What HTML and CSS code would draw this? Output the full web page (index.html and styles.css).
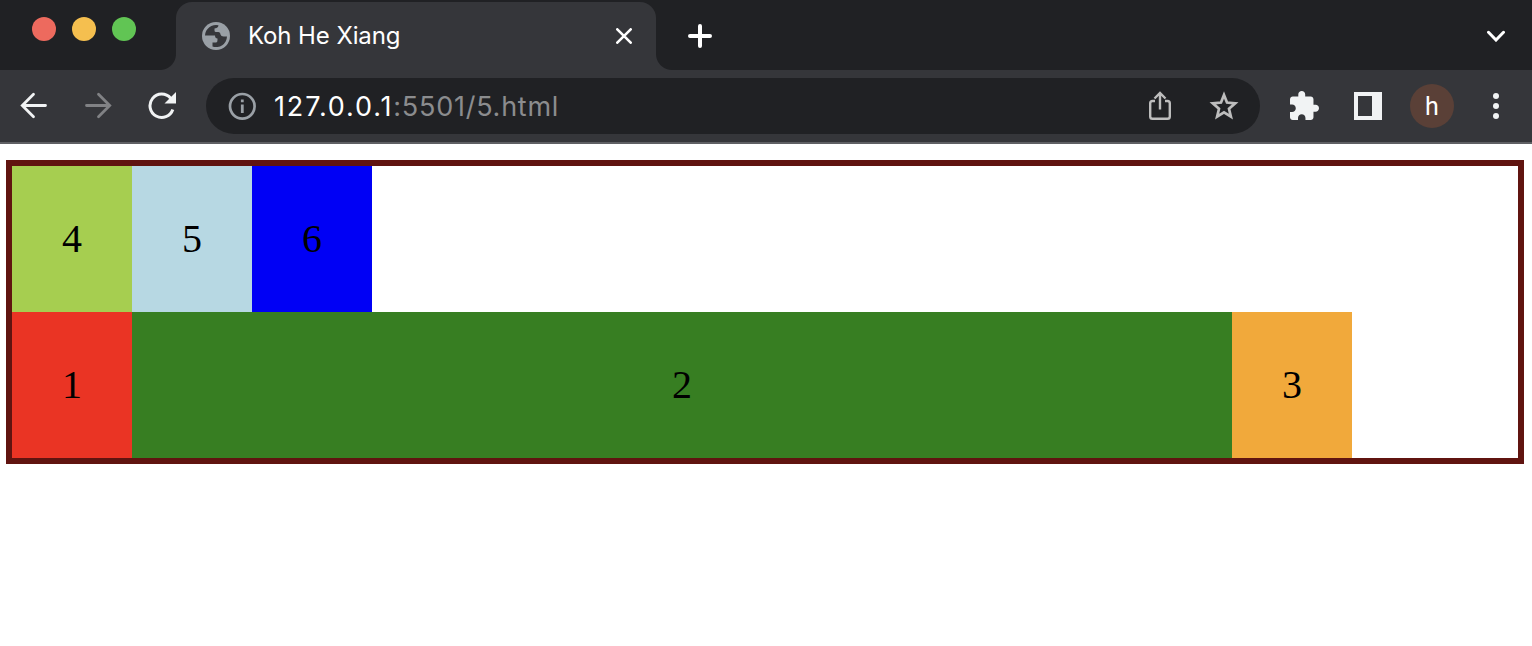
FILE: index.html
```html
<!DOCTYPE html>
<html lang="en">
<head>
<meta charset="utf-8">
<title>Koh He Xiang</title>
<link rel="stylesheet" href="styles.css">
</head>
<body>
<header class="tabstrip">
  <div class="lights"><span class="light close"></span><span class="light minimise"></span><span class="light expand"></span></div>
  <div class="tab">
    <svg class="globe" width="28" height="28" viewBox="0 0 28 28"><circle cx="14" cy="14" r="14" fill="#9aa0a6"/><path d="M3 13.500A11 11 0 0 1 16.500 3.200Q16.500 5.500 14.500 6L12.500 6.500V8.500Q12.500 10 14 10H16.500Q18.500 10 18.500 12.500Q19 14.500 21.500 14.500H25A11 11 0 0 1 10.500 24.500V20.500H14Q15.500 20.500 15.500 18V16.500Q13 16.500 13 13.500Z" fill="#35363a"/></svg>
    <span class="tab-title">Koh He Xiang</span>
    <svg class="tab-close" width="16" height="16" viewBox="0 0 16 16" fill="none" stroke="#fff" stroke-width="2.600" stroke-linecap="round"><path d="M1.300 1.300 14.700 14.700M14.700 1.300 1.300 14.700"/></svg>
  </div>
  <svg class="new-tab" width="24" height="24" viewBox="0 0 24 24" stroke="#fff" stroke-width="4" stroke-linecap="round"><path d="M12 2V22M2 12H22"/></svg>
  <svg class="tab-search" width="18" height="12" viewBox="0 0 18 12" fill="none" stroke="#fff" stroke-width="3" stroke-linecap="round"><path d="M1.500 2.300 9 10 16.500 2.300"/></svg>
</header>
<nav class="toolbar">
  <div class="nav-buttons">
    <svg width="28" height="28" viewBox="0 0 28 28" fill="none" stroke="#f1f3f4" stroke-width="2.800" stroke-linecap="round"><path d="M25.500 13.500H2.500M13.500 2.300 2.300 13.500 13.500 24.700"/></svg>
    <svg width="28" height="28" viewBox="0 0 28 28" fill="none" stroke="#818285" stroke-width="2.800" stroke-linecap="round"><path d="M2.500 13.500H25.500M14.500 2.300 25.700 13.500 14.500 24.700"/></svg>
    <svg width="28" height="28" viewBox="0 0 28 28"><path d="M22.600 6.200A11.700 11.700 0 1 0 24.800 17.500" fill="none" stroke="#f1f3f4" stroke-width="3"/><path d="M28 0V11.500H16.500Z" fill="#f1f3f4"/></svg>
  </div>
  <div class="omnibox">
    <svg width="28" height="28" viewBox="0 0 28 28" fill="none"><circle cx="14.300" cy="14.300" r="12.300" stroke="#9aa0a6" stroke-width="2.700"/><path d="M12.900 7.500h2.800v2.800h-2.800zM12.900 12.600h2.800v8.400h-2.800z" fill="#9aa0a6"/></svg>
    <span class="url"><span class="host">127.0.0.1</span><span class="path">:5501/5.html</span></span>
    <svg class="share" width="24" height="30" viewBox="0 0 24 30" fill="none" stroke="#bdbdbd" stroke-width="2.400"><path d="M7 10H4.500Q2.200 10 2.200 12.300V25.500Q2.200 27.800 4.500 27.800H19.500Q21.800 27.800 21.800 25.500V12.300Q21.800 10 19.500 10H17M12 18.500V2.500M6.500 7.500 12 2 17.500 7.500"/></svg>
    <svg class="star" width="30" height="30" viewBox="0 0 30 30" fill="none" stroke="#bdbdbd" stroke-width="2.700"><path d="M15 4 18 11.600 26.200 12.300 20 17.700 21.900 25.700 15 21.400 8.100 25.700 10 17.700 3.800 12.300 12 11.600Z"/></svg>
  </div>
  <svg class="puzzle" width="29" height="29" viewBox="2 1 21 21" fill="#f1f3f4"><path d="M20.500 11H19V7c0-1.100-.9-2-2-2h-4V3.500C13 2.120 11.880 1 10.500 1S8 2.120 8 3.500V5H4c-1.100 0-1.990.9-1.990 2v3.800H3.500c1.490 0 2.700 1.210 2.700 2.700s-1.210 2.700-2.700 2.700H2V20c0 1.100.9 2 2 2h3.800v-1.500c0-1.490 1.210-2.700 2.700-2.700 1.490 0 2.700 1.210 2.700 2.700V22H17c1.100 0 2-.9 2-2v-4h1.500c1.380 0 2.500-1.120 2.500-2.500S21.880 11 20.500 11z"/></svg>
  <svg class="panel" width="28" height="28" viewBox="0 0 28 28"><path d="M0 0H28V28H0ZM4 4V24H18V4Z" fill="#f1f3f4" fill-rule="evenodd"/></svg>
  <span class="avatar">h</span>
  <svg class="menu" width="6" height="26" viewBox="0 0 6 26" fill="#f1f3f4"><circle cx="3" cy="3" r="3"/><circle cx="3" cy="13" r="3"/><circle cx="3" cy="23" r="3"/></svg>
</nav>
<main class="container">
  <div class="item lime">4</div><div class="item sky">5</div><div class="item blue">6</div>
  <div class="item red">1</div><div class="item green">2</div><div class="item orange">3</div>
</main>
</body>
</html>
```
FILE: styles.css
```css
* { box-sizing: border-box; }
body { margin: 0; background: #fff; height: 646px; overflow: hidden; }
svg { display: block; flex: none; }
.tabstrip { height: 70px; background: #202124; display: flex; align-items: flex-start; font-family: Inter, sans-serif; }
.lights { display: flex; gap: 16px; padding: 17px 40px 0 32px; width: 176px; }
.light { width: 24px; height: 24px; border-radius: 50%; flex: none; }
.close { background: #ed6a5e; }
.minimise { background: #f5bf4f; }
.expand { background: #61c554; }
.tab { position: relative; width: 480px; height: 68px; margin-top: 2px; padding: 0 24px 0 26px; background: #35363a; border-radius: 16px 16px 0 0; display: flex; align-items: center; }
.tab::before, .tab::after { content: ""; position: absolute; bottom: 0; width: 16px; height: 16px; }
.tab::before { left: -16px; background: radial-gradient(circle at 0 0, transparent 15.5px, #35363a 16.5px); }
.tab::after { right: -16px; background: radial-gradient(circle at 100% 0, transparent 15.5px, #35363a 16.5px); }
.tab-title { margin-left: 18px; color: #fff; font-size: 24px; line-height: 30px; letter-spacing: -.1px; white-space: nowrap; }
.tab-close { margin-left: auto; }
.new-tab { margin: 24px 0 0 32px; }
.tab-search { margin: 30px 27px 0 auto; }
.toolbar { height: 74px; background: #35363a; border-bottom: 2px solid #5f6064; display: flex; align-items: center; padding: 0 33px 0 20px; font-family: Inter, sans-serif; }
.nav-buttons { display: flex; gap: 36px; }
.omnibox { width: 1054px; height: 56px; margin-left: 30px; padding: 0 21px 0 22px; border-radius: 28px; background: #202124; display: flex; align-items: center; }
.url { margin-left: 18px; padding-top: 2px; font-size: 27px; line-height: 34px; color: #fff; white-space: nowrap; }
.host { letter-spacing: 1.85px; }
.path { color: #8b8c8e; letter-spacing: .75px; }
.share { margin-left: auto; }
.star { margin-left: 37px; }
.puzzle { margin: 0 0 2px 30px; }
.panel { margin-left: 35px; }
.avatar { width: 44px; height: 44px; margin-left: 28px; border-radius: 50%; background: #5a4037; color: #fff; font: 25px/46px Roboto, sans-serif; text-align: center; }
.menu { margin-left: auto; }
.container { width: 1518px; margin: 16px 0 0 6px; border: 6px solid #601410; display: grid; grid-template-columns: 120px 120px 120px 860px 120px; grid-auto-rows: 146px; }
.item { padding: 50px; font: 40px/46px "Liberation Serif", serif; color: #000; text-align: center; }
.lime { background: #a6ce50; }
.sky { background: #b7d8e3; }
.blue { background: #0000f5; }
.red { background: #ea3424; grid-column: 1; }
.green { background: #377e22; grid-column: 2 / span 3; }
.orange { background: #f1a93b; }
```
